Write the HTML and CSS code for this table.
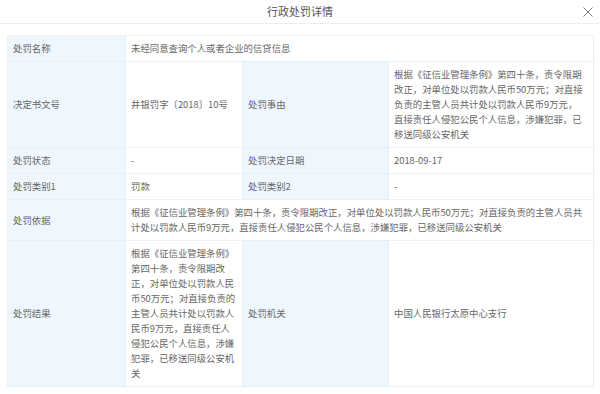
FILE: index.html
```html
<!DOCTYPE html>
<html lang="zh-CN">
<head>
<meta charset="utf-8">
<title>行政处罚详情</title>
<link rel="stylesheet" href="styles.css">
</head>
<body>
<div class="dialog">
  <div class="header">
    <span class="title">行政处罚详情</span>
    <span class="close">
      <svg width="10" height="10" viewBox="0 0 10 10"><path d="M0.5 0.5 L9.5 9.5 M9.5 0.5 L0.5 9.5" stroke="#777" stroke-width="1" fill="none"/></svg>
    </span>
  </div>
  <div class="body">
    <table class="detail">
      <colgroup>
        <col class="c1"><col class="c2"><col class="c3"><col class="c4">
      </colgroup>
      <tr>
        <td class="label">处罚名称</td>
        <td colspan="3">未经同意查询个人或者企业的信贷信息</td>
      </tr>
      <tr>
        <td class="label">决定书文号</td>
        <td>井银罚字〔2018〕10号</td>
        <td class="label">处罚事由</td>
        <td>根据《征信业管理条例》第四十条，责令限期改正，对单位处以罚款人民币50万元；对直接负责的主管人员共计处以罚款人民币9万元，直接责任人侵犯公民个人信息，涉嫌犯罪，已移送同级公安机关</td>
      </tr>
      <tr>
        <td class="label">处罚状态</td>
        <td>-</td>
        <td class="label">处罚决定日期</td>
        <td>2018-09-17</td>
      </tr>
      <tr>
        <td class="label">处罚类别1</td>
        <td>罚款</td>
        <td class="label">处罚类别2</td>
        <td>-</td>
      </tr>
      <tr>
        <td class="label">处罚依据</td>
        <td colspan="3">根据《征信业管理条例》第四十条，责令限期改正，对单位处以罚款人民币50万元；对直接负责的主管人员共计处以罚款人民币9万元，直接责任人侵犯公民个人信息，涉嫌犯罪，已移送同级公安机关</td>
      </tr>
      <tr>
        <td class="label">处罚结果</td>
        <td>根据《征信业管理条例》第四十条，责令限期改正，对单位处以罚款人民币50万元；对直接负责的主管人员共计处以罚款人民币9万元，直接责任人侵犯公民个人信息，涉嫌犯罪，已移送同级公安机关</td>
        <td class="label">处罚机关</td>
        <td>中国人民银行太原中心支行</td>
      </tr>
    </table>
  </div>
</div>
</body>
</html>
```
FILE: styles.css
```css
html, body {
  margin: 0;
  padding: 0;
  background: #fff;
}
body {
  font-family: "Noto Sans CJK SC", "Microsoft YaHei", sans-serif;
  color: #666;
}
.dialog {
  width: 600px;
}
.header {
  position: relative;
  height: 23px;
  border-bottom: 1px solid #eeeeee;
  display: flex;
  align-items: center;
  justify-content: center;
}
.title {
  font-size: 11px;
  color: #555;
  line-height: 23px;
}
.close {
  position: absolute;
  right: 7px;
  top: 7px;
  width: 10px;
  height: 10px;
  display: flex;
}
.body {
  padding: 11px 7px 0 7px;
}
.detail {
  width: 586px;
  table-layout: fixed;
  border-collapse: collapse;
  font-size: 9.4px;
  line-height: 15px;
}
.c1 { width: 118px; }
.c2 { width: 117px; }
.c3 { width: 146px; }
.c4 { width: 205px; }
.detail td {
  border: 1px solid #e8f0f8;
  padding: 5px 5px;
  vertical-align: middle;
  text-align: left;
  color: #666;
}
.detail td:last-child {
  padding-right: 8px;
}
.detail td.label {
  background: #eef6fe;
}
```
